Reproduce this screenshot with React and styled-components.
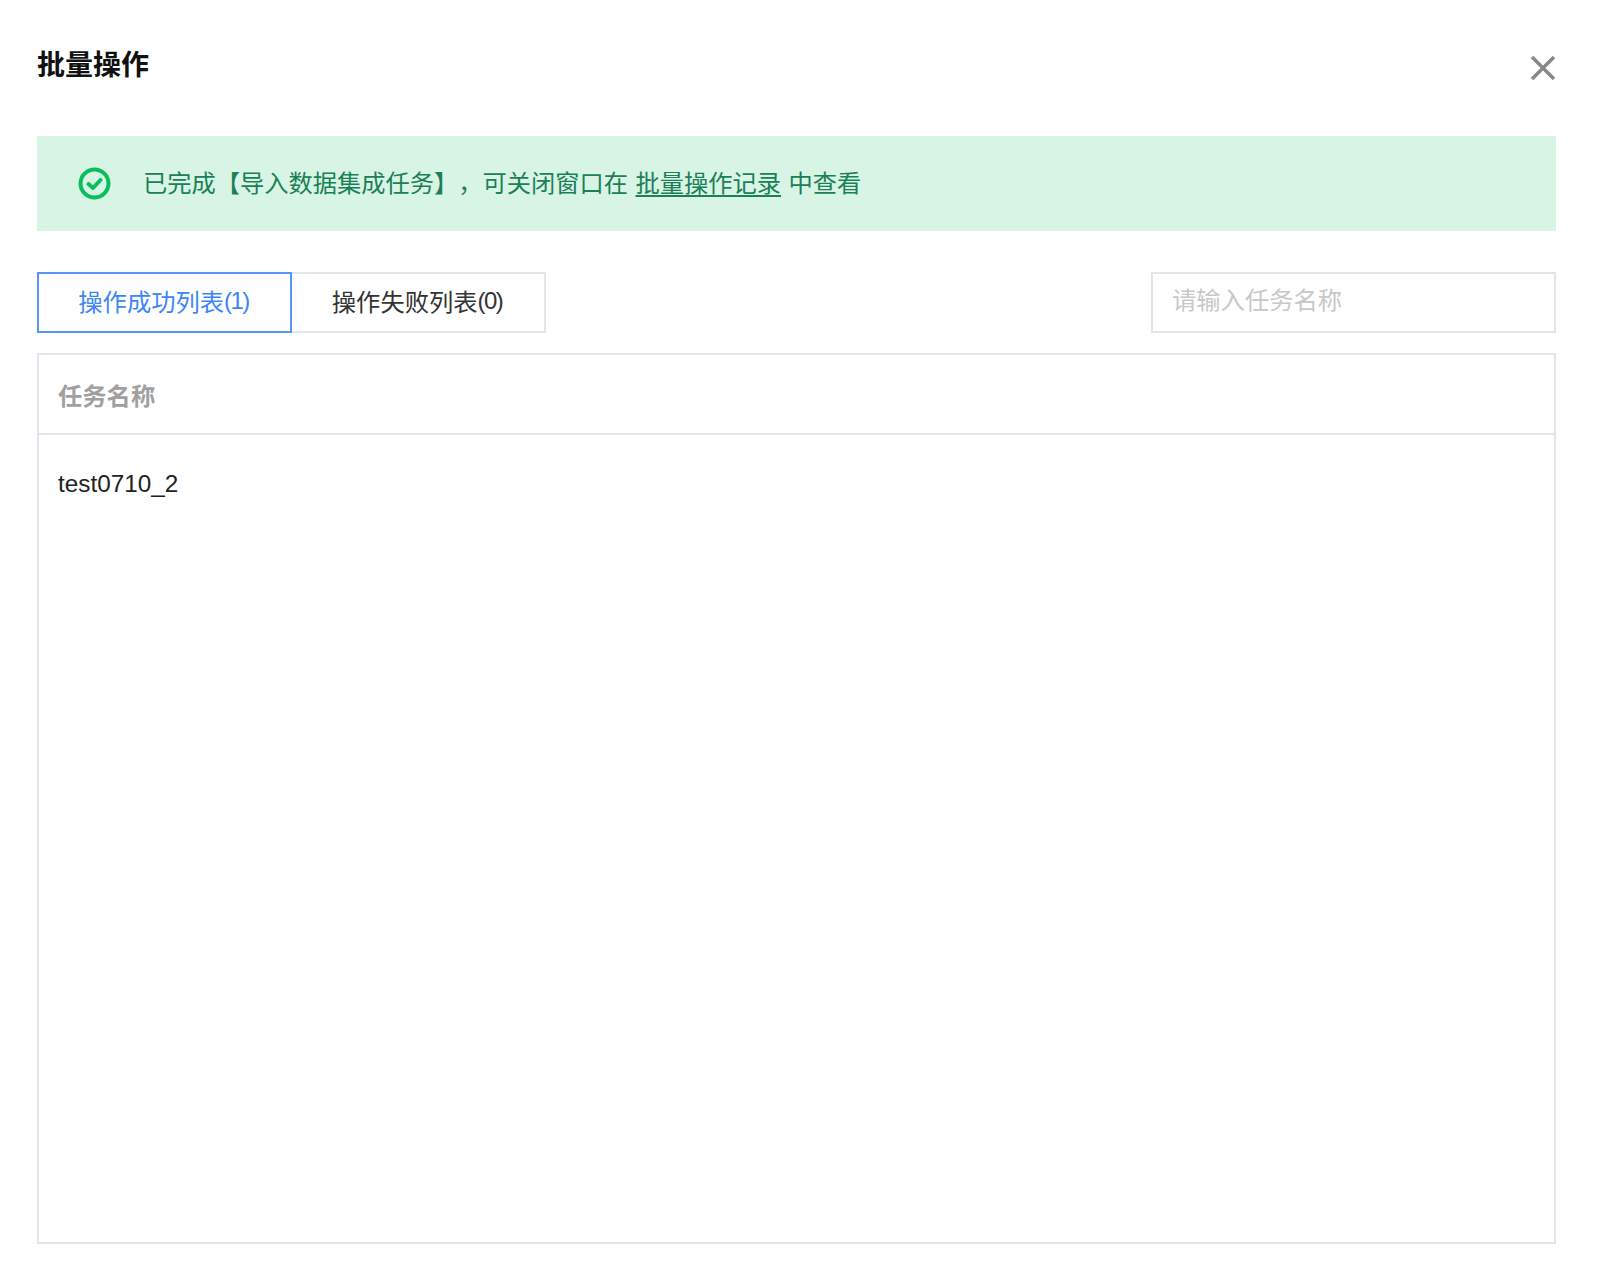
import styled, { createGlobalStyle } from "styled-components";

const GlobalStyle = createGlobalStyle`
  html, body {
    margin: 0;
    padding: 0;
    background: #fff;
  }
  body {
    font-family: "Liberation Sans", "Noto Sans CJK SC", sans-serif;
    text-spacing-trim: space-all;
  }
`;

const Dialog = styled.div`
  width: 1598px;
  height: 1284px;
  box-sizing: border-box;
  padding: 47px 42px 0 37px;
  display: flex;
  flex-direction: column;
  background: #fff;
`;

const Header = styled.div`
  display: flex;
  justify-content: space-between;
  align-items: flex-start;
  height: 89px;
`;

const Title = styled.h3`
  margin: 0;
  font-size: 28px;
  line-height: 38px;
  font-weight: 700;
  color: #111;
`;

const CloseButton = styled.button`
  border: 0;
  padding: 0;
  margin-top: 8px;
  background: none;
  width: 26px;
  height: 26px;
  color: #888;
  svg {
    display: block;
  }
`;

const Notice = styled.div`
  height: 95px;
  box-sizing: border-box;
  padding: 0 0 4px 41px;
  display: flex;
  align-items: center;
  background: #d7f4e4;
  color: #1a8058;
  font-size: 24.25px;
`;

const NoticeIcon = styled.svg`
  width: 33px;
  height: 33px;
  margin: 4px 32px 0 0;
  flex: none;
`;

const DocLink = styled.a`
  color: inherit;
  text-decoration: underline;
  text-underline-offset: 3px;
  margin: 0 7.5px;
`;

const Toolbar = styled.div`
  margin-top: 41px;
  display: flex;
  justify-content: space-between;
`;

const Tabs = styled.div`
  display: flex;
`;

const Tab = styled.div`
  width: ${props => (props.$active ? "255px" : "256px")};
  height: 61px;
  box-sizing: border-box;
  padding: 0 2px 4px 0;
  display: flex;
  align-items: center;
  justify-content: center;
  font-size: 24.3px;
  border: 2px solid ${props => (props.$active ? "#5596f7" : "#e2e5ec")};
  color: ${props => (props.$active ? "#3c86f6" : "#333")};
  margin-left: ${props => (props.$active ? "0" : "-2px")};
  position: relative;
  z-index: ${props => (props.$active ? 1 : 0)};
`;

const Count = styled.span`
  letter-spacing: -1.6px;
  font-size: 24px;
`;

const SearchInput = styled.input`
  width: 405px;
  height: 61px;
  box-sizing: border-box;
  border: 2px solid #e2e5ec;
  outline: none;
  padding: 0 19px 3px;
  font-family: inherit;
  font-size: 24.3px;
  color: #222;
  &::placeholder {
    color: #c8c8c8;
  }
`;

const TableBox = styled.div`
  margin-top: 20px;
  height: 891px;
  box-sizing: border-box;
  border: 2px solid #e2e5ec;
`;

const HeadCell = styled.div`
  height: 80px;
  box-sizing: border-box;
  padding: 0 19px;
  display: flex;
  align-items: center;
  font-size: 24.3px;
  font-weight: 700;
  color: #a0a0a0;
  border-bottom: 2px solid #e2e5ec;
`;

const BodyCell = styled.div`
  padding: 33px 19px;
  font-size: 24.3px;
  line-height: 32px;
  color: #222;
`;

function App() {
  return (
    <>
      <GlobalStyle />
      <Dialog>
        <Header>
          <Title>批量操作</Title>
          <CloseButton aria-label="关闭">
            <svg viewBox="0 0 26 26" width="26" height="26" fill="none" stroke="currentColor" strokeWidth="3.4">
              <path d="M2 2 L24 24 M24 2 L2 24" />
            </svg>
          </CloseButton>
        </Header>
        <Notice>
          <NoticeIcon viewBox="0 0 33 33" fill="none" stroke="#0abf5b" strokeWidth="4">
            <circle cx="16.5" cy="16.5" r="14" />
            <path d="M10.5 17 L15 21 L22.5 13" strokeLinecap="round" strokeLinejoin="round" />
          </NoticeIcon>
          <span>
            已完成【导入数据集成任务】，可关闭窗口在
            <DocLink>批量操作记录</DocLink>
            中查看
          </span>
        </Notice>
        <Toolbar>
          <Tabs>
            <Tab $active>操作成功列表<Count>(1)</Count></Tab>
            <Tab>操作失败列表<Count>(0)</Count></Tab>
          </Tabs>
          <SearchInput placeholder="请输入任务名称" />
        </Toolbar>
        <TableBox>
          <HeadCell>任务名称</HeadCell>
          <BodyCell>test0710_2</BodyCell>
        </TableBox>
      </Dialog>
    </>
  );
}

export default App;
